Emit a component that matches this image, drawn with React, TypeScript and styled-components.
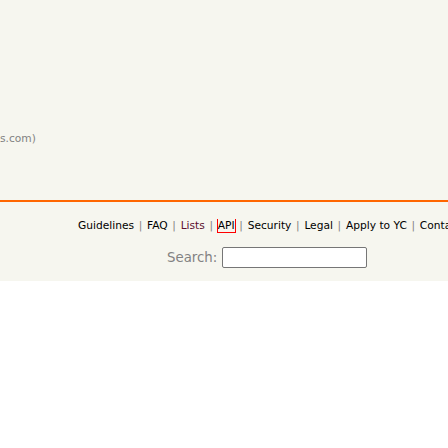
import React from "react";
import styled, { createGlobalStyle } from "styled-components";

const Global = createGlobalStyle`
  html, body { margin: 0; padding: 0; background: #ffffff; }
  body { font-family: "DejaVu Sans", Verdana, sans-serif; }
`;

const Page = styled.div`
  background: #f6f6ef;
  height: 281px;
  width: 448px;
  overflow: hidden;
  display: flex;
  flex-direction: column;
`;

const SiteRow = styled.div`
  margin-top: 132px;
  height: 14px;
  white-space: nowrap;
  font-size: 10.67px;
  line-height: 14px;
  color: #828282;
`;

const Rule = styled.div`
  margin-top: 54px;
  height: 2px;
  background: #ff6600;
`;

const Links = styled.div`
  margin-top: 17px;
  padding-left: 78px;
  white-space: nowrap;
  overflow: hidden;
  font-size: 10.67px;
  line-height: 14px;
  color: #828282;
`;

const Link = styled.a<{ $visited?: boolean; $boxed?: boolean }>`
  color: ${(p) => (p.$visited ? "#5c0f30" : "#000000")};
  text-decoration: none;
  outline: ${(p) => (p.$boxed ? "1px solid #ff0000" : "none")};
  outline-offset: 0px;
`;

const SepMark = styled.span`
  margin: 0 1.3px;
  color: #828282;
`;

const SearchForm = styled.form`
  margin: 14px 0 0 167px;
  display: flex;
  align-items: center;
  gap: 5px;
  font-size: 13.33px;
  color: #828282;
`;

const SearchInput = styled.input`
  font-family: "Liberation Mono", monospace;
  font-size: 13.33px;
  width: 145px;
  height: 21px;
  box-sizing: border-box;
  border: 1px solid #767676;
  border-radius: 2px;
  background: #ffffff;
  padding: 1px 2px;
`;

export default function App() {
  const items = ["Guidelines", "FAQ", "Lists", "API", "Security", "Legal", "Apply to YC", "Contact"];
  return (
    <>
      <Global />
      <Page>
        <SiteRow>s.com)</SiteRow>
        <Rule />
        <Links>
          {items.map((t, i) => (
            <React.Fragment key={t}>
              {i > 0 && <SepMark> | </SepMark>}
              <Link href="#" $visited={t === "Lists"} $boxed={t === "API"}>
                {t}
              </Link>
            </React.Fragment>
          ))}
        </Links>
        <SearchForm onSubmit={(e) => e.preventDefault()}>
          Search:
          <SearchInput type="text" size={17} />
        </SearchForm>
      </Page>
    </>
  );
}
